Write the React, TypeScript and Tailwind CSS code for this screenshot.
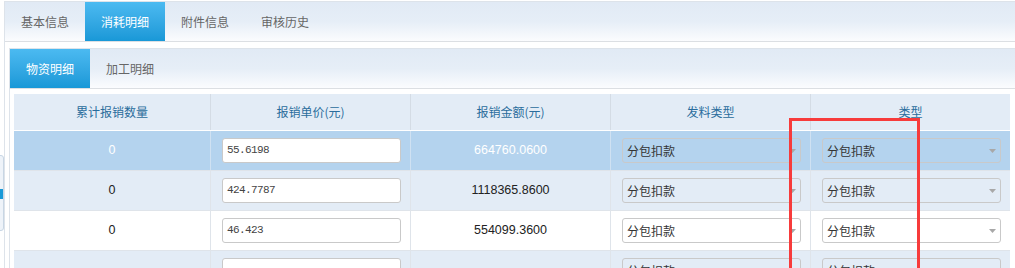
import React from "react";

const rows = [
  { qty: "0", price: "55.6198", amount: "664760.0600", bg: "bg-[#b4d3ee]", sel: true },
  { qty: "0", price: "424.7787", amount: "1118365.8600", bg: "bg-[#e3ecf6]", sel: false },
  { qty: "0", price: "46.423", amount: "554099.3600", bg: "bg-white", sel: false },
  { qty: "", price: "", amount: "", bg: "bg-[#e3ecf6]", sel: false },
];

const cjk = { fontFamily: '"Noto Sans CJK SC", "Noto Sans", sans-serif' } as React.CSSProperties;

function Select() {
  return (
    <div className="relative h-[25px] w-[179px] rounded-[3px] border border-[#c9c9c9] flex items-center pl-[4px] text-[12px] text-[#333]">
      <span>分包扣款</span>
      <svg className="absolute right-[4px] top-[10px]" width="7" height="4" viewBox="0 0 7 4">
        <path d="M0 0 L7 0 L3.5 4 Z" fill="#a8a8a8" />
      </svg>
    </div>
  );
}

export default function App() {
  const tabs = ["基本信息", "消耗明细", "附件信息", "审核历史"];
  return (
    <div className="relative w-[1015px] h-[268px] overflow-hidden bg-white" style={cjk}>
      {/* left edge widget */}
      <div className="absolute left-[-6px] top-[155px] w-[10px] h-[76px] rounded-[3px] border border-[#c8d6e4] bg-[#eef3f9]">
        <div className="absolute left-[5px] top-[33px] w-[3px] h-[10px] bg-[#1a9ad8]" />
      </div>

      <div className="ml-[4px] mt-[1px] border-t border-l border-[#dde3ea] h-[300px]">
        {/* top tab bar */}
        <div className="flex h-[40px] border-b border-[#dcdfe3] bg-gradient-to-b from-[#e1eaf5] via-[#e6eef7] to-[#fbfcfe]">
          {tabs.map((t, i) => (
            <div
              key={t}
              className={
                i === 1
                  ? "w-[80px] flex items-center justify-center text-[12px] text-white bg-gradient-to-b from-[#4bbaf1] to-[#1898d7]"
                  : "w-[80px] flex items-center justify-center text-[12px] text-[#666]"
              }
            >
              {t}
            </div>
          ))}
        </div>

        {/* inner panel */}
        <div className="ml-[4px] mt-[6px] border-t border-l border-[#dde3ea] h-[300px]">
          <div className="flex h-[40px] border-b border-[#dcdfe3] bg-gradient-to-b from-[#e1eaf5] via-[#e6eef7] to-[#fbfcfe]">
            <div className="w-[80px] flex items-center justify-center text-[12px] text-white bg-gradient-to-b from-[#4bbaf1] to-[#1898d7]">
              物资明细
            </div>
            <div className="w-[80px] flex items-center justify-center text-[12px] text-[#666]">加工明细</div>
          </div>

          {/* table */}
          <div className="ml-[4px] mt-[5px] w-[996px]">
            <div className="grid grid-cols-[196px_200px_200px_200px_200px] h-[36px] bg-[#e3ecf6] text-[12px] text-[#2a6c9c]">
              {["累计报销数量", "报销单价(元)", "报销金额(元)", "发料类型", "类型"].map((h, i) => (
                <div
                  key={h}
                  className={
                    i === 0
                      ? "flex items-center justify-center"
                      : "flex items-center justify-center border-l border-[#d4dce5]"
                  }
                >
                  {h}
                </div>
              ))}
            </div>
            {rows.map((r, idx) => (
              <div
                key={idx}
                className={
                  "grid grid-cols-[196px_200px_200px_200px_200px] h-[40px] border-t " +
                  (idx === 0 ? "border-white " : "border-[#dfe4ea] ") +
                  r.bg
                }
              >
                <div
                  className={
                    "flex items-center justify-center text-[12.5px] " + (r.sel ? "text-white" : "text-[#222]")
                  }
                  style={{ fontFamily: '"Liberation Sans", Arial, sans-serif' }}
                >
                  {r.qty}
                </div>
                <div className={"flex items-center pl-[11px] border-l " + (r.sel ? "border-[#cfe1f2]" : "border-[#dfe4ea]")}>
                  <div
                    className="h-[25px] w-[179px] rounded-[3px] border border-[#c9c9c9] bg-white flex items-center pl-[4px] text-[11px] tracking-[-0.6px] text-[#444]"
                    style={{ fontFamily: '"Liberation Mono", monospace' }}
                  >
                    {r.price}
                  </div>
                </div>
                <div
                  className={
                    "flex items-center justify-center text-[12.5px] border-l " +
                    (r.sel ? "text-white border-[#cfe1f2]" : "text-[#222] border-[#dfe4ea]")
                  }
                  style={{ fontFamily: '"Liberation Sans", Arial, sans-serif' }}
                >
                  {r.amount}
                </div>
                <div className={"flex items-center pl-[11px] border-l " + (r.sel ? "border-[#cfe1f2]" : "border-[#dfe4ea]")}>
                  <Select />
                </div>
                <div className={"flex items-center pl-[11px] border-l " + (r.sel ? "border-[#cfe1f2]" : "border-[#dfe4ea]")}>
                  <Select />
                </div>
              </div>
            ))}
          </div>
        </div>
      </div>

      {/* red highlight box */}
      <div className="absolute left-[789px] top-[118px] w-[131px] h-[200px] border-[3px] border-[#f73b3b]" />
    </div>
  );
}
